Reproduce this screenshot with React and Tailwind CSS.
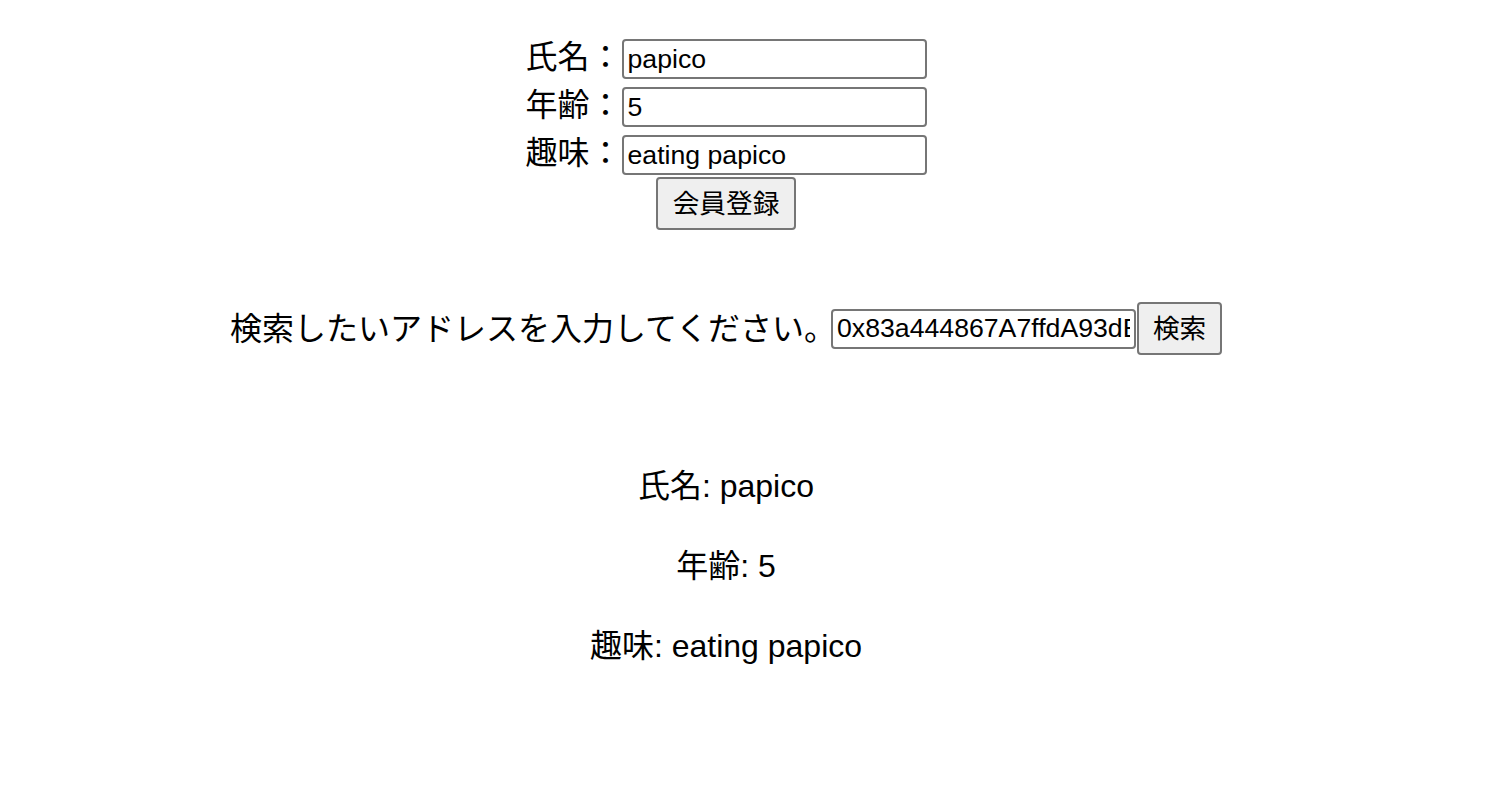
export default function App() {
  const font = { fontFamily: '"Liberation Sans", "Noto Sans CJK JP", sans-serif' };
  const inputCls =
    "w-[305px] h-[40px] border-2 border-[#767676] rounded-[4px] px-[4px] text-[26.67px] text-black bg-white outline-none";
  const btnCls =
    "border-2 border-[#767676] rounded-[4px] bg-[#efefef] text-black text-[26.67px] px-[12px]";
  return (
    <div
      className="w-[1452px] flex flex-col items-center pt-[35px] text-black bg-white min-h-[806px]"
      style={{ fontFamily: '"Liberation Sans", "Noto Sans CJK JP", sans-serif' }}
    >
      {[
        ["氏名：", "papico"],
        ["年齢：", "5"],
        ["趣味：", "eating papico"],
      ].map(([label, value]) => (
        <div key={label} className="flex items-center h-[48px]">
          <span className="text-[32px] leading-[48px] mt-[-5px]">{label}</span>
          <input className={inputCls} style={font} defaultValue={value} readOnly />
        </div>
      ))}
      <button className={btnCls + " h-[53px] w-[140px] mt-[-2px]"} style={font}>
        会員登録
      </button>

      <div className="flex items-center h-[53px] mt-[72px]">
        <span className="text-[32px] leading-[48px] mr-[-5px]">検索したいアドレスを入力してください。</span>
        <input
          className={inputCls + " w-[304px] ml-[0px]"}
          style={font}
          defaultValue="0x83a444867A7ffdA93dB4F2cE1a9d0E6b7C8f2A3d"
          readOnly
        />
        <button className={btnCls + " h-[53px] w-[85px] ml-[1px]"} style={font}>
          検索
        </button>
      </div>

      <div className="flex flex-col items-center mt-[107px] gap-[32px]">
        <p className="text-[32px] leading-[48px]">氏名: papico</p>
        <p className="text-[32px] leading-[48px]">年齢: 5</p>
        <p className="text-[32px] leading-[48px]">趣味: eating papico</p>
      </div>
    </div>
  );
}
